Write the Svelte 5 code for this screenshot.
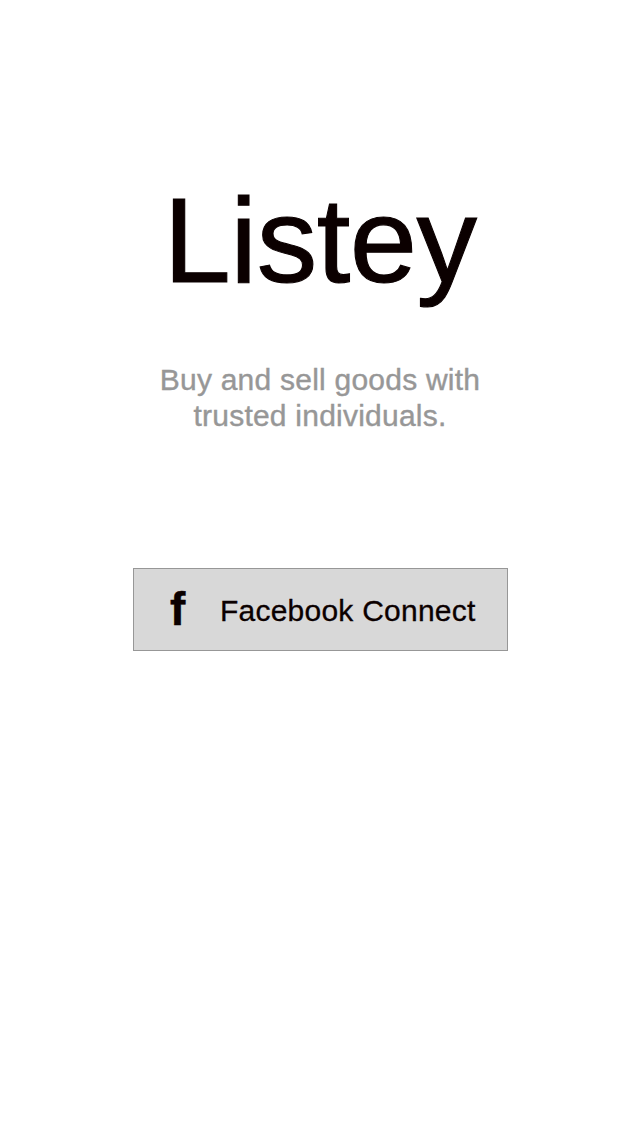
<script>
  const name = 'Listey';
</script>

<main>
  <h1>{name}</h1>
  <p><span>Buy and sell goods with</span><span>trusted individuals.</span></p>
  <button type="button"><b>f</b><span class="label">Facebook Connect</span></button>
</main>

<style>
  :global(body) { margin: 0; background: #fff; }
  main {
    box-sizing: border-box;
    width: 640px;
    height: 1136px;
    padding-top: 168px;
    display: flex;
    flex-direction: column;
    align-items: center;
    background: #fff;
    font-family: "Liberation Sans", Arial, sans-serif;
  }
  h1 {
    margin: 0;
    height: 144px;
    font-size: 121px;
    line-height: 144px;
    font-weight: 400;
    letter-spacing: -0.5px;
    color: #0b0000;
    -webkit-text-stroke: 1.1px #0b0000;
    white-space: nowrap;
  }
  p {
    margin: 50px 0 0;
    display: flex;
    flex-direction: column;
    align-items: center;
    font-size: 30px;
    line-height: 36px;
    letter-spacing: 0.23px;
    color: #979797;
    -webkit-text-stroke: 0.4px #979797;
    white-space: nowrap;
  }
  button {
    box-sizing: border-box;
    width: 375px;
    height: 83px;
    margin: 134px 0 0 1px;
    padding: 0 0 0 36px;
    display: flex;
    align-items: center;
    border: 1px solid #979797;
    border-radius: 0;
    background: #d8d8d8;
    color: #0b0000;
    font-family: inherit;
    font-size: 30px;
    text-align: left;
    white-space: nowrap;
  }
  b { width: 50px; font-size: 46px; line-height: 46px; padding-bottom: 1px; -webkit-text-stroke: 0.5px #0b0000; }
  .label { letter-spacing: 0.23px; padding-top: 2px; -webkit-text-stroke: 0.3px #0b0000; }
</style>
